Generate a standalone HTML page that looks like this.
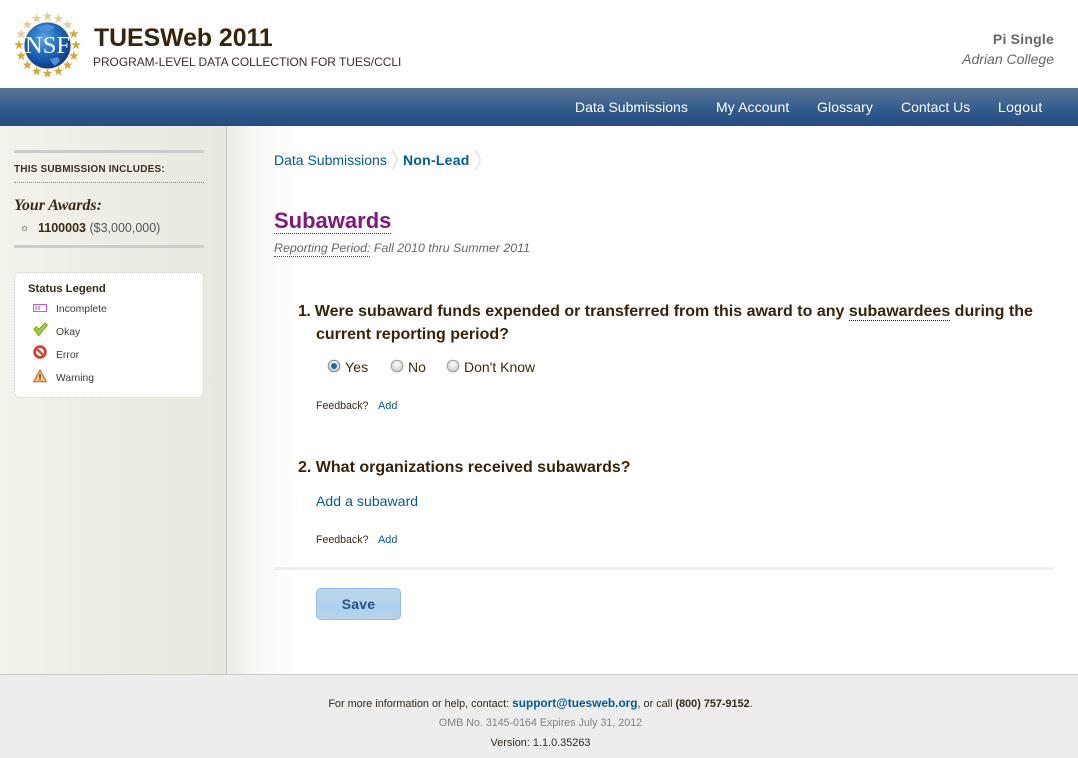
<!DOCTYPE html>
<html><head><meta charset="utf-8"><title>TUESWeb 2011</title>
<style>
html,body{margin:0;padding:0;background:#fff}
#p{position:relative;width:1078px;height:758px;overflow:hidden;font-family:"Liberation Sans",sans-serif;color:#3a2a15;background:#fff}
.a{position:absolute;white-space:nowrap}
.t{line-height:20px;height:20px}
a{color:#005b96;text-decoration:none}
</style></head><body><div id="p">
<svg class="a" style="left:10px;top:5px" width="80" height="80" viewBox="0 0 80 80">
<defs><radialGradient id="g" cx="42%" cy="35%" r="70%"><stop offset="0" stop-color="#5aa6e6"/><stop offset=".5" stop-color="#1f68bd"/><stop offset="1" stop-color="#0b3382"/></radialGradient>
<polygon id="s" points="0,-5 1.2,-1.7 4.8,-1.6 2,.6 3,4.2 0,2 -3,4.2 -2,.6 -4.8,-1.6 -1.2,-1.7"/></defs>
<g fill="#e3d08e">
<use href="#s" transform="translate(37.5,11.5)"/><use href="#s" transform="translate(48.4,13.7)"/><use href="#s" transform="translate(26.6,13.7)"/><use href="#s" transform="translate(57.65,19.85)"/><use href="#s" transform="translate(17.35,19.85)"/><use href="#s" transform="translate(11.2,29.1)"/></g>
<g fill="#d6a92c"><use href="#s" transform="translate(63.8,29.1)"/><use href="#s" transform="translate(66,40)"/><use href="#s" transform="translate(9,40)"/><use href="#s" transform="translate(63.8,50.9)"/><use href="#s" transform="translate(11.2,50.9)"/><use href="#s" transform="translate(57.65,60.15)"/><use href="#s" transform="translate(17.35,60.15)"/><use href="#s" transform="translate(48.4,66.3)"/><use href="#s" transform="translate(26.6,66.3)"/><use href="#s" transform="translate(37.5,68.5)"/></g>
<circle cx="37.5" cy="40" r="24.5" fill="#f7f1da"/>
<circle cx="37.5" cy="40.5" r="23" fill="url(#g)"/>
<path d="M27 22l10-3 8 3-5 4-8 1zM40 54l8-2 2 4-5 5-3-3z" fill="#4d90d4"/>
<text x="37.5" y="48" text-anchor="middle" font-family="Liberation Serif" font-size="24" fill="#fff" textLength="45" lengthAdjust="spacingAndGlyphs">NSF</text>
</svg>
<div class="a t" style="left:94px;top:29px;font-size:24.8px;line-height:20px;font-weight:bold;color:#3a2409">TUESWeb 2011</div>
<div class="a t" style="left:93px;top:52px;font-size:11.93px;color:#3a2a30">PROGRAM-LEVEL DATA COLLECTION FOR TUES/CCLI</div>
<div class="a t" style="right:24px;top:29px;font-size:14px;font-weight:bold;letter-spacing:.22px;color:#666">Pi Single</div>
<div class="a t" style="right:24px;top:49px;font-size:14px;font-style:italic;color:#666">Adrian College</div>

<div class="a" style="left:0;top:88px;width:1078px;height:38px;background:linear-gradient(#5b7697,#2f5a8b 60%,#244d7e)"></div>
<div class="a t" style="left:575px;top:97px;font-size:14px;color:#fff">Data Submissions</div>
<div class="a t" style="left:716px;top:97px;font-size:14px;letter-spacing:.1px;color:#fff">My Account</div>
<div class="a t" style="left:817px;top:97px;font-size:14px;letter-spacing:.1px;color:#fff">Glossary</div>
<div class="a t" style="left:901px;top:97px;font-size:14px;color:#fff">Contact Us</div>
<div class="a t" style="left:998px;top:97px;font-size:14px;letter-spacing:.3px;color:#fff">Logout</div>

<div class="a" style="left:0;top:126px;width:226px;height:548px;background:linear-gradient(90deg,#f3f2eb,#e8e8df)"></div>
<div class="a" style="left:226px;top:126px;width:1px;height:548px;background:#c9c9c5"></div>
<div class="a" style="left:227px;top:126px;width:75px;height:548px;background:linear-gradient(90deg,#ebebe5,#f8f8f5 40%,#fff)"></div>
<div class="a" style="left:0;top:674px;width:1078px;height:84px;background:#ededed"></div>
<div class="a" style="left:0;top:674px;width:1078px;height:1px;background:#cbcbcb"></div>

<div class="a" style="left:14px;top:150px;width:190px;height:3px;background:#ccc"></div>
<div class="a t" style="left:14px;top:160px;font-size:10px;font-weight:bold;letter-spacing:.19px;color:#3a2f22">THIS SUBMISSION INCLUDES:</div>
<div class="a" style="left:14px;top:182px;width:190px;border-top:1px dotted #888"></div>
<div class="a t" style="left:14px;top:196px;font-family:'Liberation Serif',serif;font-size:15.9px;font-weight:bold;font-style:italic;color:#3a2a15">Your Awards:</div>
<div class="a" style="left:22px;top:226px;width:3px;height:3px;border:1px solid #8d8a7c;border-radius:50%"></div>
<div class="a t" style="left:38px;top:218px;font-size:12.5px;color:#555"><b style="color:#3a2a15">1100003</b> ($3,000,000)</div>
<div class="a" style="left:14px;top:245px;width:190px;height:3px;background:#ccc"></div>

<div class="a" style="left:14px;top:272px;width:188px;height:124px;background:#fff;border:1px dotted #c4c4c4;border-radius:6px"></div>
<div class="a t" style="left:28px;top:279px;font-size:11.3px;font-weight:bold;color:#33291c">Status Legend</div>
<svg class="a" style="left:33px;top:304px" width="14" height="9"><rect x=".5" y=".5" width="13" height="7" fill="#fff" stroke="#d94fc4"/><rect x="2" y="2" width="2" height="4" fill="#e39ad8"/><rect x="5" y="2" width="2" height="4" fill="#e39ad8"/></svg>
<div class="a t" style="left:56px;top:300px;font-size:10.4px;color:#3c3a40">Incomplete</div>
<svg class="a" style="left:33px;top:322px" width="15" height="15" viewBox="0 0 15 15"><path d="M.8 7.2L3.3 4.8l2.5 2.4L12 .9l2.4 2.3L5.8 13.6z" fill="#a9cf2e" stroke="#7f9c24" stroke-width=".9"/></svg>
<div class="a t" style="left:56px;top:323px;font-size:10.4px;color:#3c3a40">Okay</div>
<svg class="a" style="left:33px;top:345px" width="14" height="14" viewBox="0 0 14 14"><circle cx="7" cy="7" r="5.4" fill="#fff" stroke="#dc3a20" stroke-width="2.6"/><path d="M3 3l8 8" stroke="#e0452c" stroke-width="2.6"/></svg>
<div class="a t" style="left:56px;top:346px;font-size:10.4px;color:#3c3a40">Error</div>
<svg class="a" style="left:33px;top:369px" width="14" height="14" viewBox="0 0 14 14"><path d="M7 1L13.4 12.7H.6z" fill="#fbc76e" stroke="#dc5f34" stroke-width="1.1" stroke-linejoin="round"/><rect x="6.4" y="5" width="1.2" height="3.8" fill="#3a2410"/><rect x="6.4" y="9.6" width="1.2" height="1.3" fill="#3a2410"/></svg>
<div class="a t" style="left:56px;top:369px;font-size:10.3px;color:#3c3a40">Warning</div>

<div class="a t" style="left:274px;top:150px;font-size:14px"><a href="#">Data Submissions</a></div>
<svg class="a" style="left:391px;top:149px" width="8" height="22"><path d="M1 1l5.5 10L1 21" fill="none" stroke="#d8d8d8"/></svg>
<div class="a t" style="left:403px;top:150px;font-size:14px;font-weight:bold;letter-spacing:.25px;color:#005b96">Non-Lead</div>
<svg class="a" style="left:474px;top:149px" width="8" height="22"><path d="M1 1l5.5 10L1 21" fill="none" stroke="#d8d8d8"/></svg>

<div class="a" style="left:274px;top:208px;height:25px;line-height:25px;font-size:22px;font-weight:bold;color:#80187f;border-bottom:1px dotted #80187f">Subawards</div>
<div class="a t" style="left:274px;top:238px;font-size:12.4px;font-style:italic;color:#666"><span style="border-bottom:1px dotted #444;padding-bottom:1px">Reporting Period:</span> Fall 2010 thru Summer 2011</div>

<div class="a t" style="left:298px;top:302px;font-size:16px;font-weight:bold;color:#3a2409"><span style="letter-spacing:-.5px">1.</span> Were subaward funds expended or transferred from this award to any <span style="border-bottom:1px dotted #3a2409">subawardees</span> during the</div>
<div class="a t" style="left:316px;top:325px;font-size:16px;font-weight:bold;color:#3a2409">current reporting period?</div>

<svg class="a" style="left:327px;top:359px" width="14" height="14"><defs><radialGradient id="r" cx="50%" cy="35%" r="70%"><stop offset="0" stop-color="#fff"/><stop offset="1" stop-color="#c4c4c4"/></radialGradient></defs><circle cx="7" cy="7" r="5.8" fill="url(#r)" stroke="#7a8793"/><circle cx="7" cy="7" r="3" fill="#1a6c9c"/></svg>
<div class="a t" style="left:345px;top:357px;font-size:14px;letter-spacing:.2px;color:#3a2a15">Yes</div>
<svg class="a" style="left:390px;top:359px" width="14" height="14"><circle cx="7" cy="7" r="5.8" fill="url(#r)" stroke="#999"/></svg>
<div class="a t" style="left:408px;top:357px;font-size:14px;color:#3a2a15">No</div>
<svg class="a" style="left:446px;top:359px" width="14" height="14"><circle cx="7" cy="7" r="5.8" fill="url(#r)" stroke="#999"/></svg>
<div class="a t" style="left:464px;top:357px;font-size:14px;color:#3a2a15">Don't Know</div>
<div class="a t" style="left:316px;top:396px;font-size:10.6px;color:#3a2a15">Feedback?</div>
<div class="a t" style="left:378px;top:396px;font-size:10.9px"><a href="#">Add</a></div>

<div class="a t" style="left:298px;top:458px;font-size:16px;font-weight:bold;color:#3a2409">2. What organizations received subawards?</div>
<div class="a t" style="left:316px;top:491px;font-size:14px;letter-spacing:.07px"><a href="#">Add a subaward</a></div>
<div class="a t" style="left:316px;top:530px;font-size:10.6px;color:#3a2a15">Feedback?</div>
<div class="a t" style="left:378px;top:530px;font-size:10.9px"><a href="#">Add</a></div>
<div class="a" style="left:274px;top:567px;width:780px;height:3px;background:#eee"></div>
<div class="a" style="left:316px;top:588px;width:83px;height:30px;border:1px solid #8fbfe8;border-radius:5px;background:linear-gradient(#b9d6ea 0,#b6d5ec 48%,#a6d1f2 50%,#bdd3e8 100%);text-align:center;line-height:30px;font-size:14px;font-weight:bold;letter-spacing:.2px;color:#2c5180">Save</div>

<div class="a t" style="left:0;width:1081px;text-align:center;top:693px;font-size:10.85px;color:#33291c;">For more information or help, contact: <a href="#" style="font-weight:bold;font-size:11.85px">support@tuesweb.org</a>, or call <b>(800) 757-9152</b>.</div>
<div class="a t" style="left:0;width:1081px;text-align:center;top:713px;font-size:10.7px;color:#808080">OMB No. 3145-0164 Expires July 31, 2012</div>
<div class="a t" style="left:0;width:1081px;text-align:center;top:733px;font-size:10.9px;color:#33291c">Version: 1.1.0.35263</div>
</div></body></html>
